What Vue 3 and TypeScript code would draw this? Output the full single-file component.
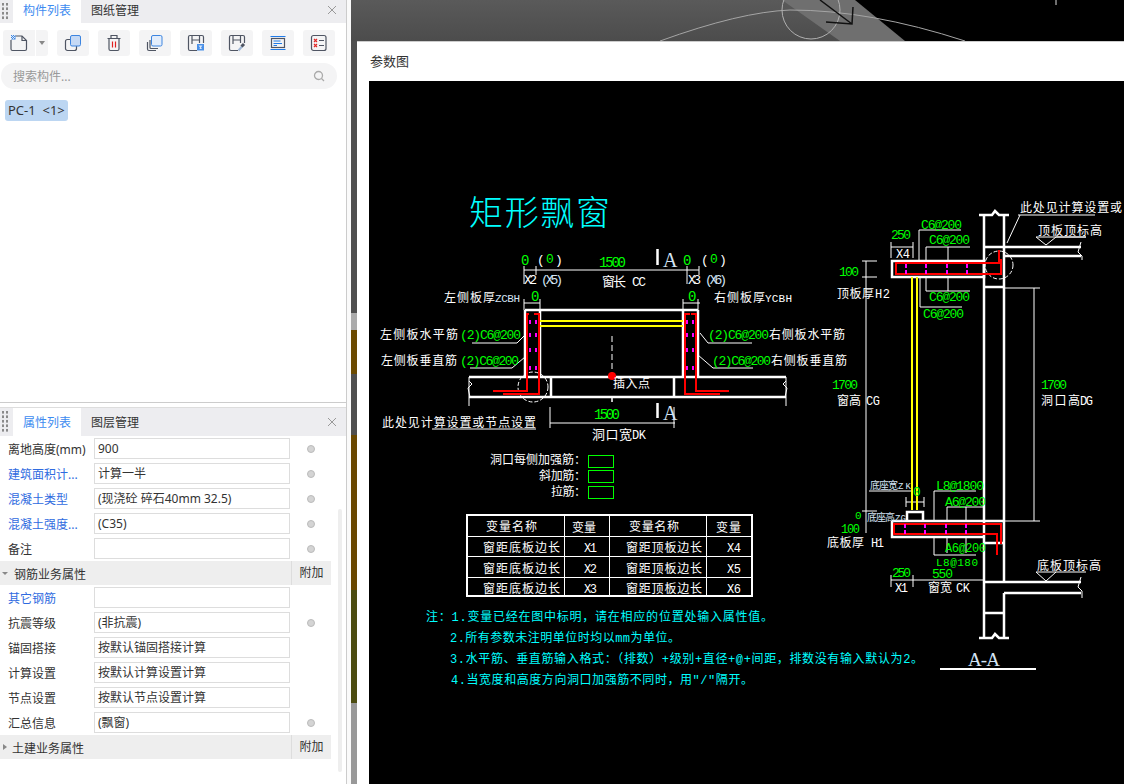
<script setup lang="ts">
type Row = { label: string; value?: string; link?: boolean; dot?: boolean; section?: boolean; open?: boolean }
// x, baseline, width, text, colour, font size
type Cad = [number, number, number, string, string, number?]

const G = "#00ff00"
const W = "#ffffff"
const C = "#00ffff"
const B = "#d4e4f4"

const rows: Row[] = [
  { label: "离地高度(mm)", value: "900", dot: true },
  { label: "建筑面积计...", value: "计算一半", link: true, dot: true },
  { label: "混凝土类型", value: "(现浇砼 碎石40mm 32.5)", link: true, dot: true },
  { label: "混凝土强度...", value: "(C35)", link: true, dot: true },
  { label: "备注", value: "", dot: true },
  { label: "钢筋业务属性", section: true, open: true },
  { label: "其它钢筋", value: "", link: true },
  { label: "抗震等级", value: "(非抗震)", dot: true },
  { label: "锚固搭接", value: "按默认锚固搭接计算" },
  { label: "计算设置", value: "按默认计算设置计算" },
  { label: "节点设置", value: "按默认节点设置计算" },
  { label: "汇总信息", value: "(飘窗)", dot: true },
  { label: "土建业务属性", section: true, open: false }
]

const tableCols = [
  ["窗距底板边长", 483, 77],
  ["窗距顶板边长", 626, 76]
] as const

const cadText: Cad[] = [
  [469, 225, 141, "矩形飘窗", C, 34],
  [521, 265, 8, "0", G, 14],
  [537, 264, 5, "(", W, 13],
  [546, 263, 8, "0", G, 13],
  [555, 264, 5, ")", W, 13],
  [599, 267, 27, "1500", G, 14],
  [663, 267, 12, "A", B, 20],
  [683, 265, 8, "0", G, 14],
  [701, 264, 5, "(", W, 13],
  [710, 263, 8, "0", G, 13],
  [719, 264, 5, ")", W, 13],
  [524, 284, 13, "X2", W, 13],
  [541, 284, 22, "(X5)", B, 13],
  [602, 286, 24, "窗长", W, 13],
  [632, 286, 14, "CC", W, 13],
  [688, 284, 13, "X3", W, 13],
  [705, 284, 22, "(X6)", B, 13],
  [444, 302, 51, "左侧板厚", W, 12],
  [495, 302, 25, "ZCBH", B, 11],
  [531, 301, 8, "0", G, 14],
  [688, 301, 8, "0", G, 14],
  [714, 302, 51, "右侧板厚", W, 12],
  [765, 302, 27, "YCBH", W, 11],
  [380, 339, 78, "左侧板水平筋", W, 12],
  [460, 339, 61, "(2)C6@200", G, 13],
  [708, 339, 61, "(2)C6@200", G, 13],
  [769, 339, 76, "右侧板水平筋", W, 12],
  [381, 365, 76, "左侧板垂直筋", W, 12],
  [460, 365, 59, "(2)C6@200", G, 13],
  [712, 365, 59, "(2)C6@200", G, 13],
  [771, 365, 76, "右侧板垂直筋", W, 12],
  [613, 388, 37, "插入点", W, 12],
  [594, 419, 26, "1500", G, 14],
  [663, 420, 12, "A", B, 20],
  [382, 427, 154, "此处见计算设置或节点设置", W, 12],
  [592, 439, 40, "洞口宽", W, 13],
  [632, 439, 14, "DK", W, 12],
  [490, 464, 96, "洞口每侧加强筋：", W, 12],
  [539, 480, 47, "斜加筋：", W, 12],
  [551, 496, 35, "拉筋：", W, 12],
  [486, 531, 51, "变量名称", W, 12],
  [572, 532, 24, "变量", W, 12],
  [629, 531, 50, "变量名称", W, 12],
  [716, 532, 25, "变量", W, 12],
  [584, 552, 13, "X1", W, 12],
  [584, 573, 13, "X2", W, 12],
  [584, 593, 13, "X3", W, 12],
  [727, 552, 14, "X4", W, 12],
  [727, 573, 14, "X5", W, 12],
  [727, 593, 14, "X6", W, 12],
  [426, 621, 347, "注：1.变量已经在图中标明，请在相应的位置处输入属性值。", C, 12],
  [450, 642, 230, "2.所有参数未注明单位时均以mm为单位。", C, 12],
  [450, 663, 473, "3.水平筋、垂直筋输入格式：（排数）+级别+直径+@+间距，排数没有输入默认为2。", C, 12],
  [451, 684, 302, "4.当宽度和高度方向洞口加强筋不同时，用\"/\"隔开。", C, 12],
  [1020, 212, 102, "此处见计算设置或", W, 12],
  [1038, 235, 64, "顶板顶标高", W, 12],
  [921, 229, 41, "C6@200", G, 13],
  [929, 244, 41, "C6@200", G, 13],
  [929, 301, 41, "C6@200", G, 13],
  [923, 318, 41, "C6@200", G, 13],
  [891, 239, 20, "250", G, 13],
  [896, 258, 14, "X4", W, 12],
  [839, 276, 20, "100", G, 13],
  [837, 298, 37, "顶板厚", W, 12],
  [875, 298, 15, "H2", W, 12],
  [832, 389, 26, "1700", G, 13],
  [837, 405, 24, "窗高", W, 12],
  [866, 405, 14, "CG", W, 12],
  [1041, 389, 26, "1700", G, 13],
  [1041, 405, 39, "洞口高", W, 12],
  [1080, 405, 13, "DG", W, 12],
  [870, 489, 28, "底座宽", B, 10],
  [898, 489, 13, "ZK", B, 9],
  [913, 496, 7, "0", G, 13],
  [867, 521, 28, "底座高", B, 10],
  [895, 521, 11, "ZG", B, 9],
  [855, 519, 7, "0", G, 11],
  [841, 533, 19, "100", G, 12],
  [936, 490, 48, "L8@1800", G, 13],
  [945, 506, 41, "A6@200", G, 13],
  [945, 552, 41, "A6@200", G, 12],
  [936, 566, 42, "L8@180", G, 11],
  [827, 547, 37, "底板厚", W, 12],
  [871, 547, 13, "H1", W, 12],
  [1037, 570, 64, "底板顶标高", W, 12],
  [892, 577, 19, "250", G, 13],
  [932, 578, 21, "550", G, 13],
  [895, 592, 13, "X1", W, 12],
  [928, 592, 24, "窗宽", W, 12],
  [956, 592, 14, "CK", W, 12],
  [968, 666, 32, "A-A", B, 19]
]
for (const y of [552, 573, 593]) {
  for (const [name, x, w] of tableCols) cadText.push([x, y, w, name, W, 12])
}

const thick = [
  // plan
  "M525 310H698M525 310V377M540 310V377M683 310V377M698 310V377",
  "M469 377H540M683 377H786M540 377H683M469 397H786M551 377V397M674 377V397",
  "M657.5 249V265M657.5 403V418",
  // section walls and slabs
  "M984 215V638M1004 215V582M1004 593V638M979 215H992L995 211L999 215H1009M979 638H992L995 634L999 638H1009",
  "M984 247H1081M1004 256H1081M984 287H1004M984 582H1081M1004 593H1081M984 613H1004",
  "M892 261H984V277H892ZM892 521H1004M892 521V537H984M984 543H1004M907 520V512H923V520"
]
const thin = [
  "M524 270H699M524 266V284M536 266V275M687 266V284M699 266V275",
  "M524 303H540M683 303H700M524 299V310M540 299V310M683 299V310M698 299V310",
  "M472 343H517L527 333M470 368H512L525 357M708 343H752M708 343L700 333M713 368H753M713 368L698 355",
  "M469 377V406M786 377V406M550 407V428M674 407V428M550 423H675M432 429H536M612 397V402",
  "M469 381L472 384L468 388L470 397M786 381L783 384L787 388L785 397",
  "M919 261V230H961M926 261V247H970M948 247V261M926 277V291H970M948 277V291M920 277V307H962",
  "M891 247H913M891 242V258M913 242V258",
  "M862 261H877M862 277H877M866 261V533M862 511H877M1004 288H1040M1034 288V521M1004 521H1040",
  "M1018 215H1095M1020 215L1007 243M1036 237H1086L1056 237L1046 245L1036 237",
  "M869 491H911M906 502H924M906 497V507M912 497V507M917 497V507M924 497V507",
  "M934 521V491H976M947 521V507H984M966 507V521M947 537V553M966 537V553M934 537V555H976",
  "M1036 572H1086M1036 572L1046 581L1056 572",
  "M891 580H984M891 575V587M913 575V587",
  "M1081 242L1078 252L1082 256V260M1081 577L1078 587L1082 591V598"
]
const red = [
  "M493 391H527V314H529M534 314H539V394H503M729 391H696V314H691M690 314H685V394H720",
  "M999 250V263H896V274H1001V259",
  "M1001 544V524H894V534H997V555"
]
const magenta = [
  [530, 536, 687, 693].flatMap((x) => [322, 335, 350, 368].map((y) => `M${x} ${y - 2}V${y + 2}`)).join(""),
  [906, 926, 947, 967].flatMap((x) => [266, 272].map((y) => `M${x} ${y - 2}V${y + 2}`)).join(""),
  [905, 925, 946, 966].flatMap((x) => [526, 532].map((y) => `M${x} ${y - 2}V${y + 2}`)).join("")
]

const isSerif = (s: string) => s === "A" || s === "A-A"
</script>

<template>
  <div class="app">
    <aside class="side">
      <section class="panel-top">
        <header class="tabs tabs-short">
          <span class="grip"></span>
          <span class="tab active">构件列表</span>
          <span class="tab">图纸管理</span>
          <svg class="close" width="10" height="10" viewBox="0 0 10 10">
            <path d="M1 1L9 9M9 1L1 9" stroke="#999" stroke-width="1" fill="none" />
          </svg>
        </header>

        <div class="toolbar">
          <div class="split">
            <button class="tool">
              <svg viewBox="0 0 32 26">
                <path class="ic" d="M12.500 6H19L23.500 10.500V19a1.500 1.500 0 0 1-1.500 1.500H9.500A1.500 1.500 0 0 1 8 19V10" />
                <path class="ic" d="M19 6V10.500H23.500" />
                <rect x="8" y="5" width="4.500" height="4.500" fill="#3d85e0" />
                <path d="M9 5h1v1H9zM11 5h1v1h-1zM8 6h1v1H8zM10 6h1v1h-1zM9 7h1v1H9zM11 7h1v1h-1zM8 8h1v1H8zM10 8h1v1h-1z" fill="#dce8f8" />
              </svg>
            </button>
            <button class="caret-btn"><i class="caret"></i></button>
          </div>
          <button class="tool">
            <svg viewBox="0 0 32 26">
              <rect class="ic" x="8.500" y="9.500" width="11" height="11" rx="2" />
              <rect x="13.500" y="5.500" width="10" height="10.500" rx="1.500" fill="#c5d9f5" stroke="#3d85e0" />
            </svg>
          </button>
          <button class="tool">
            <svg viewBox="0 0 32 26">
              <path class="ic" d="M9.500 8.500H22.500M13 8V5.500H19V8M11 9V19a1.500 1.500 0 0 0 1.500 1.500H19.500A1.500 1.500 0 0 0 21 19V9" />
              <path d="M14.500 11.500V17.500M17.500 11.500V17.500" stroke="#e02020" stroke-width="1.200" fill="none" />
            </svg>
          </button>
          <button class="tool">
            <svg viewBox="0 0 32 26">
              <path class="ic" d="M8.500 12V19a1.500 1.500 0 0 0 1.500 1.500H17M11 10V17.500a1 1 0 0 0 1 1H19" />
              <rect x="12.500" y="5.500" width="10.500" height="10.500" rx="1.500" fill="#e3edfb" stroke="#3d85e0" />
            </svg>
          </button>
          <button class="tool">
            <svg viewBox="0 0 32 26">
              <path class="ic" d="M17 20.500H10A1.500 1.500 0 0 1 8.500 19V7A1.500 1.500 0 0 1 10 5.500H22A1.500 1.500 0 0 1 23.500 7V13M12 6V14M12 10H19.500M19.500 6V13" />
              <rect x="17" y="14" width="7" height="6.500" fill="#4a90e8" />
              <path d="M18.500 15.500H22.500L21 17.500L22 19H19.500L20 17.500Z" fill="#dbe8f8" />
            </svg>
          </button>
          <button class="tool">
            <svg viewBox="0 0 32 26">
              <path class="ic" d="M17 20.500H10A1.500 1.500 0 0 1 8.500 19V7A1.500 1.500 0 0 1 10 5.500H22A1.500 1.500 0 0 1 23.500 7V13M12 6V14M12 10H19.500M19.500 6V13" />
              <path d="M17.500 20.500L21 16.500" stroke="#9fb6d4" stroke-width="2" />
              <path d="M20.500 16.500L23 14" stroke="#4f5563" stroke-width="3" />
            </svg>
          </button>
          <button class="tool">
            <svg viewBox="0 0 32 26">
              <rect class="ic" x="9.500" y="8.500" width="13" height="9" />
              <path d="M8.500 6.500H23.500M8.500 19.500H23.500" stroke="#1f7ae8" stroke-width="1.200" />
              <path d="M11.500 11H18.500M11.500 13.500H20M11.500 15.500H15" stroke="#1f7ae8" />
            </svg>
          </button>
          <button class="tool">
            <svg viewBox="0 0 32 26">
              <rect class="ic" x="8.500" y="5.500" width="14.500" height="15" rx="2" />
              <path d="M11 9L14 12M14 9L11 12M11 14L14 17M14 14L11 17" stroke="#e02828" stroke-width="1.200" />
              <path d="M16 10.500H21M16 15.500H21" stroke="#4f5563" />
            </svg>
          </button>
        </div>

        <div class="search">
          <span>搜索构件...</span>
          <svg width="12" height="12" viewBox="0 0 12 12">
            <circle cx="5.500" cy="5.500" r="4" fill="none" stroke="#aaa" stroke-width="1.300" />
            <path d="M8.500 8.500L11 11" stroke="#aaa" stroke-width="1.300" />
          </svg>
        </div>

        <div class="tag">PC-1&nbsp;&nbsp;&lt;1&gt;</div>
      </section>

      <section class="panel-bottom">
        <header class="tabs tabs-tall">
          <span class="grip"></span>
          <span class="tab active">属性列表</span>
          <span class="tab">图层管理</span>
          <svg class="close" width="10" height="10" viewBox="0 0 10 10">
            <path d="M1 1L9 9M9 1L1 9" stroke="#999" stroke-width="1" fill="none" />
          </svg>
        </header>

        <div class="prop-body">
          <div class="prop-rows">
            <template v-for="row in rows" :key="row.label">
              <div v-if="row.section" class="section">
                <i :class="row.open ? 'tri-down' : 'tri-right'"></i>
                <span class="section-name">{{ row.label }}</span>
                <span class="attach">附加</span>
              </div>
              <div v-else class="row">
                <span class="label" :class="{ link: row.link }">{{ row.label }}</span>
                <span class="value">{{ row.value }}</span>
                <span class="dot-cell"><i v-if="row.dot" class="dot"></i></span>
              </div>
            </template>
          </div>
          <div class="scroll"></div>
        </div>
      </section>
    </aside>
    <div class="gutter"></div>

    <main class="stage">
      <svg class="backdrop" viewBox="351 0 773 784" preserveAspectRatio="none">
        <defs>
          <linearGradient id="shade" x1="0" y1="0" x2="0" y2="1">
            <stop offset="0" stop-color="#5a5a5a" />
            <stop offset="1" stop-color="#4c4c4c" />
          </linearGradient>
        </defs>
        <rect x="351" y="0" width="773" height="784" fill="#000" />
        <path d="M351 0H800L850 41H351Z" fill="url(#shade)" />
        <path d="M782 0H855L905 41H840Z" fill="#6f6f6f" />
        <path d="M660 41Q740 12 790 10Q870 10 965 41" fill="none" stroke="#a5a5a5" />
        <circle cx="811" cy="10" r="29" fill="none" stroke="#b0b0b0" />
        <path d="M820 0L852 24M826 22L852 24L853 7" fill="none" stroke="#111" stroke-width="1.500" />
        <path d="M1056 0V5" stroke="#ddd" />
        <rect x="351" y="41" width="6" height="272" fill="#4f4f4f" />
        <rect x="351" y="313" width="6" height="17" fill="#ababab" />
        <rect x="351" y="330" width="6" height="44" fill="#6b4a00" />
        <rect x="351" y="374" width="6" height="61" fill="#4f4f4f" />
        <rect x="351" y="435" width="6" height="155" fill="#6a4800" />
        <rect x="351" y="590" width="6" height="113" fill="#4c4c10" />
        <rect x="351" y="703" width="6" height="81" fill="#999" />
      </svg>

      <div class="dialog">
        <div class="dialog-title">参数图</div>
        <div class="canvas-wrap">
          <svg class="cad" viewBox="369 81 755 703">
            <rect x="369" y="81" width="755" height="703" fill="#000" />

            <g fill="none" stroke="#fff" stroke-width="1">
              <path v-for="d in thin" :key="d" :d="d" />
              <path d="M612 336V375M612 398V402" stroke-dasharray="6 3" />
              <circle cx="533" cy="387" r="15" stroke-dasharray="4 2" />
              <circle cx="999" cy="265" r="14" stroke-dasharray="4 2" />
              <path d="M940 669H1036" stroke-width="2" />
            </g>
            <g fill="none" stroke="#fff" stroke-width="2.500">
              <path v-for="d in thick" :key="d" :d="d" />
            </g>
            <path d="M540 321H683M540 326H683M912 277V510M917 277V510" fill="none" stroke="#ffff00" stroke-width="2" />
            <g fill="none" stroke="#ff0000" stroke-width="2">
              <path v-for="d in red" :key="d" :d="d" />
            </g>
            <g stroke="#ff00ff" stroke-width="2">
              <path v-for="d in magenta" :key="d" :d="d" />
            </g>
            <circle cx="612" cy="376" r="4" fill="#ff0000" />

            <g fill="none" stroke="#00ff00" stroke-width="1">
              <rect x="588.500" y="455.500" width="25" height="12" />
              <rect x="588.500" y="470.500" width="25" height="12" />
              <rect x="588.500" y="486.500" width="25" height="12" />
            </g>
            <g fill="none" stroke="#fff">
              <rect x="467" y="515" width="285" height="81" stroke-width="2" />
              <path d="M467 536.500H752M467 556.500H752M467 577.500H752M564.500 515V596M609.500 515V596M706.500 515V596" />
            </g>

            <text
              v-for="t in cadText"
              :key="`${t[0]}-${t[1]}-${t[3]}`"
              class="cad-text"
              :class="{ serif: isSerif(t[3]), title: t[5] === 34 }"
              :x="t[0]"
              :y="t[1]"
              :textLength="t[2]"
              :fill="t[4]"
              :font-size="t[5] ?? 12"
            >{{ t[3] }}</text>
          </svg>
        </div>
      </div>
    </main>
  </div>
</template>

<style scoped>
.app {
  display: flex;
  width: 1124px;
  height: 784px;
  overflow: hidden;
  background: #fff;
  font-family: "Noto Sans", "Noto Sans CJK SC", sans-serif;
  font-size: 12px;
  color: #333;
}

.side {
  width: 346px;
  flex: none;
  display: flex;
  flex-direction: column;
  border-right: 1px solid #ccc;
}

.gutter {
  width: 4px;
  flex: none;
  background: #fafafa;
}

.panel-top {
  height: 403px;
  flex: none;
  box-sizing: border-box;
  border-bottom: 1px solid #ccc;
}

.panel-bottom {
  flex: 1;
  margin-top: 4px;
  border-top: 1px solid #ddd;
  min-height: 0;
}

.tabs {
  display: flex;
  align-items: stretch;
  height: 23px;
  background: #ededf0;
}

.tabs-tall {
  height: 28px;
}

.tabs-short .tab {
  padding-bottom: 4px;
}

.tabs-short .close {
  margin-bottom: 4px;
}

.grip {
  width: 13px;
  flex: none;
  background-image: radial-gradient(circle, #8a8a8a 1.200px, transparent 1.400px);
  background-size: 4px 4.500px;
  background-repeat: repeat;
  background-position: 1px 2px;
  background-clip: content-box;
  padding: 3px 4px 3px 1px;
  box-sizing: border-box;
}

.tab {
  display: flex;
  align-items: center;
  padding: 0 10px;
  color: #333;
}

.tab.active {
  background: #fff;
  color: #3d8bf0;
}

.close {
  flex: none;
  margin-left: auto;
  margin-right: 9px;
  align-self: center;
}

.toolbar {
  display: flex;
  gap: 9px;
  padding: 7px 0 0 3px;
}

.split {
  display: flex;
  gap: 1px;
}

.tool,
.caret-btn {
  display: block;
  width: 32px;
  height: 26px;
  padding: 0;
  border: 0;
  border-radius: 3px;
  background: #f4f4f5;
}

.split .tool {
  border-radius: 3px 0 0 3px;
}

.caret-btn {
  width: 12px;
  border-radius: 0 3px 3px 0;
  position: relative;
}

.caret {
  display: block;
  width: 0;
  margin: 0 auto;
  border: 3px solid transparent;
  border-top: 4px solid #888;
  border-bottom: 0;
}

.tool svg {
  display: block;
  width: 32px;
  height: 26px;
}

.ic {
  fill: none;
  stroke: #4f5563;
  stroke-width: 1.200;
}

.search {
  display: flex;
  align-items: center;
  justify-content: space-between;
  height: 26px;
  margin: 7px 9px 0 1px;
  padding: 0 12px;
  border-radius: 13px;
  background: #f4f4f5;
  color: #999;
}

.tag {
  display: inline-block;
  height: 21px;
  line-height: 21px;
  margin: 11px 0 0 5px;
  padding: 0 3px;
  border-radius: 3px;
  background: #bcd6f2;
  color: #333;
  font-size: 13px;
}

.prop-body {
  display: flex;
  align-items: flex-start;
}

.prop-rows {
  width: 331px;
  flex: none;
}

.row {
  display: flex;
  align-items: center;
  height: 25px;
}

.label {
  width: 94px;
  flex: none;
  padding-left: 8px;
  box-sizing: border-box;
  white-space: nowrap;
  overflow: hidden;
}

.label.link {
  color: #2f6be0;
}

.value {
  width: 196px;
  height: 21px;
  flex: none;
  box-sizing: border-box;
  padding-left: 3px;
  border: 1px solid #ddd;
  line-height: 19px;
  white-space: nowrap;
  color: #333;
}

.dot-cell {
  flex: 1;
  display: flex;
  justify-content: center;
  padding-left: 1px;
}

.dot {
  width: 8px;
  height: 8px;
  box-sizing: border-box;
  border-radius: 50%;
  background: #d4d4d4;
  border: 1px solid #bbb;
}

.section {
  display: flex;
  align-items: center;
  height: 24px;
  background: #eee;
}

.section-name {
  margin-left: 6px;
  padding-top: 1px;
}

.tri-down,
.tri-right {
  width: 0;
  height: 0;
  flex: none;
  margin-left: 2px;
  border-style: solid;
  border-color: transparent;
}

.tri-down {
  width: 0;
  border-width: 3px 3px 0;
  border-top-color: #888;
  margin-right: 0;
}

.tri-right {
  border-width: 3px 0 3px 4px;
  border-left-color: #888;
  margin-left: 3px;
  margin-right: -1px;
}

.attach {
  margin-left: auto;
  width: 40px;
  height: 100%;
  line-height: 24px;
  text-align: center;
  border-left: 1px solid #ddd;
  box-sizing: border-box;
}

.scroll {
  width: 4px;
  height: 263px;
  margin: 73px 0 0 7px;
  border-radius: 2px;
  background: #eee;
}

.stage {
  position: relative;
  flex: 1;
  min-width: 0;
  padding: 41px 0 0 6px;
  box-sizing: border-box;
}

.backdrop {
  position: absolute;
  inset: 0;
  width: 100%;
  height: 100%;
}

.dialog {
  position: relative;
  height: 100%;
  display: flex;
  flex-direction: column;
  box-sizing: border-box;
  border-top: 1px solid #ccc;
  background: #fff;
}

.dialog-title {
  height: 39px;
  line-height: 38px;
  padding-left: 13px;
  font-size: 13px;
  color: #333;
}

.canvas-wrap {
  flex: 1;
  min-height: 0;
  padding-left: 12px;
}

.cad {
  display: block;
  width: 755px;
  height: 703px;
}

.cad-text {
  font-family: "Liberation Mono", "Noto Sans CJK SC", monospace;
}

.cad-text.serif {
  font-family: "Liberation Serif", serif;
}

.cad-text.title {
  font-weight: 300;
}
</style>

<style>
html,
body {
  margin: 0;
  background: #fff;
}
</style>
